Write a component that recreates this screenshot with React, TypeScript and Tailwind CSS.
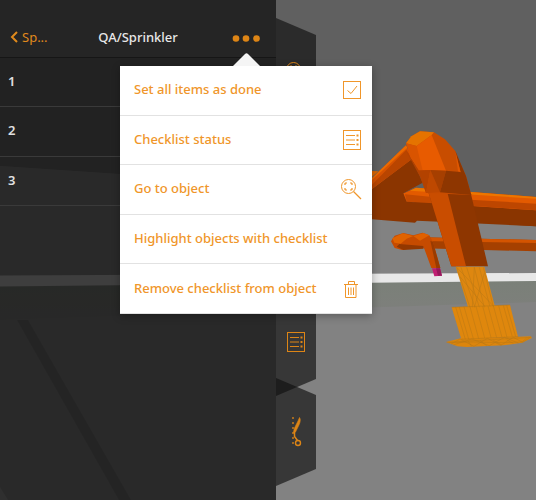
import type { ReactNode } from "react";

type MenuItem = { label: string; icon?: ReactNode };

const items = ["1", "2", "3"];

const menuItems: MenuItem[] = [
  { label: "Set all items as done", icon: <CheckIcon /> },
  { label: "Checklist status", icon: <ChecklistIcon /> },
  { label: "Go to object", icon: <GoToIcon /> },
  { label: "Highlight objects with checklist" },
  { label: "Remove checklist from object", icon: <TrashIcon /> },
];

const tools: { label: string; icon: ReactNode }[] = [
  { label: "Search", icon: <GoToIcon /> },
  { label: "Zoom to fit", icon: <GoToIcon /> },
  { label: "Select", icon: <CheckIcon /> },
  { label: "Checklists", icon: <ChecklistIcon /> },
  { label: "Clip", icon: <ScissorsIcon /> },
];

export default function App() {
  return (
    <main className="relative isolate flex min-h-screen overflow-hidden bg-[#808080] font-['Noto_Sans','Open_Sans',sans-serif] text-[13px] leading-5">
      <Scene />
      <ChecklistPanel />
      <ToolTabs />
    </main>
  );
}

function ChecklistPanel() {
  return (
    <section className="relative z-10 w-[276px] shrink-0 bg-[#131313]/80">
      <header className="relative grid h-[58px] grid-cols-[1fr_auto_1fr] items-end border-b border-[#161616] bg-white/[0.015] px-2 pb-2.5">
        <button className="flex items-center gap-0.5 justify-self-start text-[#e08a1c]">
          <svg width="12" height="14" viewBox="0 0 12 14" fill="none" aria-hidden="true">
            <path d="M9 2 4 7l5 5" stroke="currentColor" strokeWidth="2" />
          </svg>
          Sp...
        </button>
        <h1 className="font-medium text-[#e8e8e8]">QA/Sprinkler</h1>
        <div className="flex justify-self-end pr-2">
          <button aria-label="More" aria-expanded="true" className="h-5 text-[#dd8516]">
            <svg width="28" height="20" viewBox="0 0 28 20" fill="currentColor" aria-hidden="true">
              <circle cx="4" cy="11.500" r="3.3" />
              <circle cx="14" cy="11.500" r="3.3" />
              <circle cx="24.500" cy="11.500" r="3.3" />
            </svg>
          </button>
        </div>
        <ActionMenu />
      </header>
      <ul className="grid h-[148px] grid-rows-3">
        {items.map((item) => (
          <li
            key={item}
            className="flex items-center border-b border-[#3a3a3a] px-2 pb-0.5 font-semibold text-[#e0e0e0]"
          >
            {item}
          </li>
        ))}
      </ul>
    </section>
  );
}

function ActionMenu() {
  return (
    <div className="absolute top-[53px] left-[120px] w-[252px]">
      <svg className="ml-[113px] block" width="27" height="13" viewBox="0 0 27 13" aria-hidden="true">
        <path d="M0 13 12 1q1.500-1.500 3 0l12 12z" fill="#f5f5f5" />
      </svg>
      <div
        role="menu"
        className="grid h-[248px] grid-rows-5 bg-white shadow-[0_2px_8px_rgba(0,0,0,0.3)]"
      >
        {menuItems.map((item) => (
          <button
            key={item.label}
            role="menuitem"
            className="flex items-center justify-between border-b border-[#e2e2e2] pr-2.5 pl-3.5 text-left font-medium text-[#f0962a]"
          >
            <span className="pb-0.5">{item.label}</span>
            {item.icon}
          </button>
        ))}
      </div>
    </div>
  );
}

function ToolTabs() {
  return (
    <nav className="w-10 shrink-0 pt-[18px]">
      {tools.map((tool) => (
        <button
          key={tool.label}
          aria-label={tool.label}
          className="-mb-[18px] flex h-[108px] w-full items-center justify-center bg-[#101010]/65 text-[#dd8516] [clip-path:polygon(0_0,100%_17px,100%_91px,0_100%)]"
        >
          {tool.icon}
        </button>
      ))}
    </nav>
  );
}

function CheckIcon() {
  return (
    <svg width="20" height="20" viewBox="0 0 20 20" fill="none" stroke="currentColor" aria-hidden="true">
      <rect x="1.500" y="1.500" width="17" height="17" />
      <path d="m5.500 10.500 3.500 3 6-7.500" />
    </svg>
  );
}

function ChecklistIcon() {
  return (
    <svg width="20" height="20" viewBox="0 0 20 20" fill="none" stroke="currentColor" aria-hidden="true">
      <rect x="1.500" y="0.500" width="17" height="19" />
      <path d="M4 5.500h9M4 10h9M4 14.500h9" />
      <path d="M14.500 5.500h2M14.500 10h2M14.500 14.500h2" strokeWidth="2" />
    </svg>
  );
}

function GoToIcon() {
  return (
    <svg width="22" height="22" viewBox="0 0 22 22" fill="none" stroke="currentColor" aria-hidden="true">
      <circle cx="8.500" cy="8.500" r="7" />
      <path d="m13.500 13.500 7.500 7.500" strokeWidth="1.3" />
      <path d="M5 7V5.500L5.500 5H7M10 5h1.500l.5.500V7M12 10v1.500l-.5.500H10M7 12H5.500L5 11.500V10" strokeWidth="1.200" />
    </svg>
  );
}

function TrashIcon() {
  return (
    <svg width="20" height="20" viewBox="0 0 20 20" fill="none" stroke="currentColor" aria-hidden="true">
      <path d="M2 5.500h14M6.500 5V2.500h6V5M3.500 5.500v13h10.500v-13" />
      <path d="M6.500 8.500v7.500M9 8.500v7.500M11.500 8.500v7.500" />
    </svg>
  );
}

function ScissorsIcon() {
  return (
    <svg width="16" height="32" viewBox="0 0 16 32" fill="none" stroke="currentColor" aria-hidden="true">
      <path d="M5 1v30" strokeDasharray="2 3" strokeWidth="1.3" />
      <path d="M11.500 1.500c1.300 1.500.8 4.500-.3 7L7.500 16l-1.700 1c-.3-2 .2-4 1.200-6l3-6z" fill="currentColor" strokeWidth="0.600" />
      <path d="M6.500 15v5.500l3 4" strokeWidth="1.500" />
      <circle cx="10" cy="27" r="2.500" strokeWidth="1.400" />
    </svg>
  );
}

function Scene() {
  return (
    <svg
      className="absolute inset-0 -z-10 h-full w-full"
      viewBox="0 0 536 500"
      preserveAspectRatio="xMinYMin slice"
      aria-hidden="true"
    >
      <defs>
        <linearGradient id="ground" x1="0" y1="0" x2="0" y2="1">
          <stop offset="0" stopColor="#7a8078" />
          <stop offset="1" stopColor="#7f7f7d" />
        </linearGradient>
      </defs>
      <path d="M0 0h536v202L0 166z" fill="#606060" />
      <path d="M0 166 536 202v298H0z" fill="#828282" />
      <path d="M0 286 536 280v22L0 320z" fill="url(#ground)" />
      <path d="M0 275.500 536 273v8L0 286.500z" fill="#e8e8e8" />
      <path d="M17 320h11l103 180h-12z" fill="#6c6c6c" />
      <path d="M0 487 8 500H0z" fill="#a0a0a0" />
      {/* pipe geometry is drawn at three times the scene's units */}
      <g transform="translate(360 110) scale(.33333)">
        {/* far branch */}
        <path d="M190 382 528 390v34L190 415z" fill="#a54000" />
        <path d="M190 382 528 390v9L190 393z" fill="#d45400" />
        <path d="M93 394 104 377 130 369 160 376 188 368 208 376 219 396 241 474H214L192 414 165 412 126 420 104 414z" fill="#c64b00" />
        <path d="M97 385 128 370 160 378 140 386 122 401 103 398z" fill="#e06300" />
        <path d="M118 402 190 408v8l-60 4-20-10z" fill="#933800" />
        <path d="M160 378 190 369 208 376 190 386 180 392z" fill="#e06000" />
        <path d="M211 392 219 396 241 474h-12z" fill="#9a3b00" />
        <path d="M216 475h24l6 22-23 2z" fill="#c01f72" />
        <path d="M228 475h12l6 22h-12z" fill="#96195b" />
        <path d="M460 344 528 349v-3" fill="#8a3400" />
        {/* main run */}
        <path d="M128 251 168 233 528 261v88L240 335z" fill="#8a3500" />
        <path d="M128 251 168 233 528 261v40L138 275z" fill="#e35a00" />
        <path d="M168 233 528 261v5L150 242z" fill="#ed7600" />
        <path d="M135 253 210 260 216 282 140 275z" fill="#c44a00" />
        <path d="M330 269 528 281v20L335 287z" fill="#bd4600" />
        {/* left branch */}
        <path d="M36 183 55 184 36 200z" fill="#dd6700" />
        <path d="M36 237 156 145 188 218 130 250 140 275 220 280 240 335 171 332 165 338 100 333 36 328z" fill="#8b3500" />
        <path d="M36 204 138 106 157 146 36 237z" fill="#d75200" />
        <path d="M36 204 138 106 142 113 36 210z" fill="#ec6a00" />
        <path d="M139 119 157 146 36 237V224z" fill="#b94500" />
        {/* down pipe and elbow */}
        <path d="M205 246 333 252 384 469H274z" fill="#8e3600" />
        <path d="M205 246 262 247 318 469H274z" fill="#c94d00" />
        <path d="M138 100 154 79 180 64 222 67 255 88 286 123 301 160 318 198 334 255 198 249 184 203 157 145z" fill="#c84d00" />
        <path d="M138 100 154 79 180 64 222 67 214 76 170 108z" fill="#e57300" />
        <path d="M170 108 215 75 258 182 211 180 177 183z" fill="#e85b00" />
        <path d="M138 100 170 108 188 181 176 181 152 145z" fill="#d95400" />
        <path d="M138 122 176 181 211 180 198 249 180 200z" fill="#b34200" />
        <path d="M211 180 240 247 198 249z" fill="#be4800" />
        <path d="M211 180 258 182 240 247z" fill="#a63f00" />
        <path d="M258 182 301 186 286 123 318 198 334 255 240 247z" fill="#8e3600" />
        <path d="M286 123 302 187 294 184z" fill="#e05800" />
        {/* sprinkler head */}
        <path d="M287 470H373L405 590 325 594z" fill="#de8710" />
        <path d="M275 592 450 585 474 680 304 688z" fill="#df870d" />
        <path d="M258 696 302 685 475 680 512 679 516 684 486 698 430 706 320 711 292 709z" fill="#dc850d" />
        <g fill="none" stroke="#b87814" strokeWidth="1.500">
          <path d="M290 472 330 592M303 472l42 120M320 472l38 120M343 472l30 120M358 472l32 118M370 472l30 118M290 472 400 588M343 472l-6 120M373 490l-30 102M300 500l75 90" />
          <path d="M275 592 450 585M287 591l29 97M298 591l28 96M312 590l28 96M330 590l26 96M348 589l26 95M368 588l25 95M384 588l26 95M400 587l26 95M416 587l25 95M430 586l27 94M440 586l27 94" />
          <path d="M260 697 512 682M274 702 300 687 342 709 382 685 422 706 460 682 488 697 512 681M280 705 335 687 388 707 433 682 475 699M266 698 340 696 430 698 486 696 500 684M304 688 475 680M325 694l10 15M360 692l20 15M400 691l25 14M440 690l20 10" />
        </g>
      </g>
    </svg>
  );
}
